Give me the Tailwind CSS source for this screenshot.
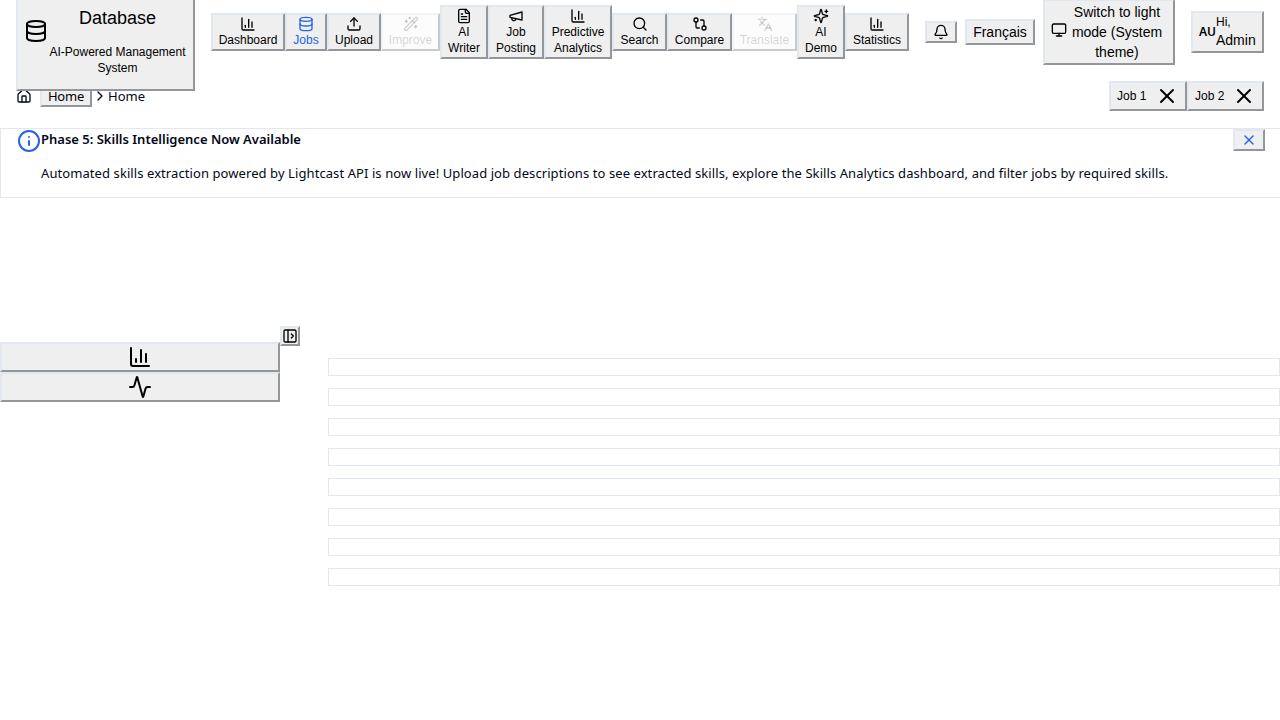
<!DOCTYPE html>
<html lang="en">
<head>
<meta charset="utf-8">
<title>Job Database</title>
<script src="https://cdn.jsdelivr.net/npm/@tailwindcss/browser@4"></script>
</head>
<body class="h-[720px] overflow-hidden bg-white font-['Noto_Sans',sans-serif] text-[#020817]">
<svg class="hidden">
  <defs>
    <symbol id="db" viewBox="0 0 24 24"><ellipse cx="12" cy="5" rx="9" ry="3"/><path d="M3 5V19A9 3 0 0 0 21 19V5"/><path d="M3 12A9 3 0 0 0 21 12"/></symbol>
    <symbol id="chart" viewBox="0 0 24 24"><path d="M3 3v16a2 2 0 0 0 2 2h16"/><path d="M18 17V9"/><path d="M13 17V5"/><path d="M8 17v-3"/></symbol>
    <symbol id="upload" viewBox="0 0 24 24"><path d="M12 3v12"/><path d="m17 8-5-5-5 5"/><path d="M21 15v4a2 2 0 0 1-2 2H5a2 2 0 0 1-2-2v-4"/></symbol>
    <symbol id="wand" viewBox="0 0 24 24"><path d="m21.64 3.64-1.28-1.28a1.21 1.21 0 0 0-1.72 0L2.36 18.64a1.21 1.21 0 0 0 0 1.72l1.28 1.28a1.2 1.2 0 0 0 1.72 0L21.64 5.36a1.2 1.2 0 0 0 0-1.72"/><path d="m14 7 3 3"/><path d="M5 6v4"/><path d="M19 14v4"/><path d="M10 2v2"/><path d="M7 8H3"/><path d="M21 16h-4"/><path d="M11 3H9"/></symbol>
    <symbol id="file" viewBox="0 0 24 24"><path d="M15 2H6a2 2 0 0 0-2 2v16a2 2 0 0 0 2 2h12a2 2 0 0 0 2-2V7Z"/><path d="M14 2v4a2 2 0 0 0 2 2h4"/><path d="M10 9H8"/><path d="M16 13H8"/><path d="M16 17H8"/></symbol>
    <symbol id="mega" viewBox="0 0 24 24"><path d="m3 11 18-5v12L3 14v-3z"/><path d="M11.6 16.8a3 3 0 1 1-5.8-1.6"/></symbol>
    <symbol id="search" viewBox="0 0 24 24"><circle cx="11" cy="11" r="8"/><path d="m21 21-4.3-4.3"/></symbol>
    <symbol id="compare" viewBox="0 0 24 24"><circle cx="18" cy="18" r="3"/><circle cx="6" cy="6" r="3"/><path d="M13 6h3a2 2 0 0 1 2 2v7"/><path d="M11 18H8a2 2 0 0 1-2-2V9"/></symbol>
    <symbol id="lang" viewBox="0 0 24 24"><path d="m5 8 6 6"/><path d="m4 14 6-6 2-3"/><path d="M2 5h12"/><path d="M7 2h1"/><path d="m22 22-5-10-5 10"/><path d="M14 18h6"/></symbol>
    <symbol id="sparkles" viewBox="0 0 24 24"><path d="M9.937 15.5A2 2 0 0 0 8.5 14.063l-6.135-1.582a.5.5 0 0 1 0-.962L8.5 9.936A2 2 0 0 0 9.937 8.5l1.582-6.135a.5.5 0 0 1 .963 0L14.063 8.5A2 2 0 0 0 15.5 9.937l6.135 1.581a.5.5 0 0 1 0 .964L15.5 14.063a2 2 0 0 0-1.437 1.437l-1.582 6.135a.5.5 0 0 1-.963 0z"/><path d="M20 3v4"/><path d="M22 5h-4"/><path d="M4 17v2"/><path d="M5 18H3"/></symbol>
    <symbol id="bell" viewBox="0 0 24 24"><path d="M10.268 21a2 2 0 0 0 3.464 0"/><path d="M3.262 15.326A1 1 0 0 0 4 17h16a1 1 0 0 0 .74-1.673C19.41 13.956 18 12.499 18 8A6 6 0 0 0 6 8c0 4.499-1.411 5.956-2.738 7.326"/></symbol>
    <symbol id="monitor" viewBox="0 0 24 24"><rect width="20" height="14" x="2" y="3" rx="2"/><path d="M8 21h8"/><path d="M12 17v4"/></symbol>
    <symbol id="home" viewBox="0 0 24 24"><path d="M15 21v-8a1 1 0 0 0-1-1h-4a1 1 0 0 0-1 1v8"/><path d="M3 10a2 2 0 0 1 .709-1.528l7-5.999a2 2 0 0 1 2.582 0l7 5.999A2 2 0 0 1 21 10v9a2 2 0 0 1-2 2H5a2 2 0 0 1-2-2z"/></symbol>
    <symbol id="chev" viewBox="0 0 24 24"><path d="m9 18 6-6-6-6"/></symbol>
    <symbol id="x" viewBox="0 0 24 24"><path d="M18 6 6 18"/><path d="m6 6 12 12"/></symbol>
    <symbol id="info" viewBox="0 0 24 24"><circle cx="12" cy="12" r="10"/><path d="M12 16v-4"/><path d="M12 8h.01"/></symbol>
    <symbol id="panel" viewBox="0 0 24 24"><rect width="18" height="18" x="3" y="3" rx="2"/><path d="M9 3v18"/><path d="m14 9 3 3-3 3"/></symbol>
    <symbol id="activity" viewBox="0 0 24 24"><path d="M22 12h-2.48a2 2 0 0 0-1.93 1.46l-2.35 8.36a.25.25 0 0 1-.48 0L9.24 2.18a.25.25 0 0 0-.48 0l-2.35 8.36A2 2 0 0 1 4.49 12H2"/></symbol>
  </defs>
</svg>
<div class="fill-none stroke-current stroke-2 [stroke-linecap:round] [stroke-linejoin:round] [&_button]:shrink-0 [&_button]:border-2 [&_button]:border-[#e2e8f0] [&_button]:[border-style:outset] [&_button]:bg-[#efefef] [&_button:disabled]:bg-[#efefef]/30 [&_svg]:shrink-0">
  <header class="relative z-10 flex h-16 items-center pl-4 font-['Liberation_Sans',sans-serif] text-black">
    <button class="-mt-0.5 flex h-[120px] w-[179px] items-center px-1.5">
      <svg class="size-6"><use href="#db"/></svg>
      <div class="flex-1 pt-[30px]">
        <h1 class="text-lg leading-7">Database</h1>
        <p class="my-3 text-xs">AI-Powered Management System</p>
      </div>
    </button>
    <nav class="ml-4 flex items-center text-xs [&_button]:flex [&_button]:flex-col [&_button]:items-center [&_button]:py-px [&_svg]:size-4">
      <button class="w-[74px]"><svg><use href="#chart"/></svg>Dashboard</button>
      <button class="w-[42px] text-[#2563eb]"><svg><use href="#db"/></svg>Jobs</button>
      <button class="w-[54px]"><svg><use href="#upload"/></svg>Upload</button>
      <button disabled class="w-[59px] text-[#101010]/35 opacity-50"><svg><use href="#wand"/></svg>Improve</button>
      <button class="w-12"><svg><use href="#file"/></svg><span>AI<br>Writer</span></button>
      <button class="w-14"><svg><use href="#mega"/></svg><span>Job<br>Posting</span></button>
      <button class="w-[68px]"><svg><use href="#chart"/></svg><span>Predictive<br>Analytics</span></button>
      <button class="w-[55px]"><svg><use href="#search"/></svg>Search</button>
      <button class="w-[65px]"><svg><use href="#compare"/></svg>Compare</button>
      <button disabled class="w-[65px] text-[#101010]/35 opacity-50"><svg><use href="#lang"/></svg>Translate</button>
      <button class="w-12"><svg><use href="#sparkles"/></svg><span>AI<br>Demo</span></button>
      <button class="w-16"><svg><use href="#chart"/></svg>Statistics</button>
    </nav>
    <button class="ml-4 flex w-8 justify-center py-px"><svg class="size-4"><use href="#bell"/></svg></button>
    <button class="ml-2 w-[70px] py-px text-sm">Français</button>
    <button class="ml-2 flex w-[132px] items-center px-1.5 py-px text-sm"><svg class="-mt-1 size-4"><use href="#monitor"/></svg><span class="flex-1">Switch to light<br>mode (System<br>theme)</span></button>
    <button class="ml-4 flex w-[73px] items-center px-1.5 py-px text-left"><span class="w-[17px] font-['Noto_Sans',sans-serif] text-xs font-semibold">AU</span><span><span class="block text-xs">Hi,</span><span class="block text-sm">Admin</span></span></button>
  </header>
  <div class="flex h-16 items-center justify-between px-4">
    <div class="flex items-center text-[13px] leading-5">
      <svg class="size-4"><use href="#home"/></svg>
      <button class="ml-2 h-[22px] w-[52px] leading-[18px] tracking-[-0.2px] text-black">Home</button>
      <svg class="size-4"><use href="#chev"/></svg>
      <span>Home</span>
    </div>
    <div class="flex font-['Liberation_Sans',sans-serif] text-xs text-black">
      <button class="flex w-[78px] items-center justify-between px-1.5 py-px">Job 1<svg class="size-6"><use href="#x"/></svg></button>
      <button class="flex w-[77px] items-center justify-between px-1.5 py-px">Job 2<svg class="size-6"><use href="#x"/></svg></button>
    </div>
  </div>
  <section class="flex h-[70px] items-start border-y border-l border-[#e2e8f0] pr-[15px] pl-4">
    <svg class="size-6 text-[#2563eb]"><use href="#info"/></svg>
    <div class="flex-1 text-[13px] whitespace-nowrap">
      <h2 class="leading-5 font-semibold">Phase 5: Skills Intelligence Now Available</h2>
      <p class="mt-3.5 leading-5 tracking-[0.082px]">Automated skills extraction powered by Lightcast API is now live! Upload job descriptions to see extracted skills, explore the Skills Analytics dashboard, and filter jobs by required skills.</p>
    </div>
    <button class="flex w-8 justify-center py-px text-[#2563eb]"><svg class="size-4"><use href="#x"/></svg></button>
  </section>
  <main class="flex pt-32">
    <aside class="w-[280px] pt-4 text-black">
      <button class="flex h-[30px] w-full items-center justify-center"><svg class="size-6"><use href="#chart"/></svg></button>
      <button class="flex h-[30px] w-full items-center justify-center"><svg class="size-6"><use href="#activity"/></svg></button>
    </aside>
    <button class="flex size-5 items-center justify-center text-black"><svg class="size-4"><use href="#panel"/></svg></button>
    <div class="ml-7 flex flex-1 flex-col gap-3 pt-8 [&>div]:h-[18px] [&>div]:border [&>div]:border-[#e2e8f0]">
      <div></div><div></div><div></div><div></div><div></div><div></div><div></div><div></div>
    </div>
  </main>
</div>
</body>
</html>
